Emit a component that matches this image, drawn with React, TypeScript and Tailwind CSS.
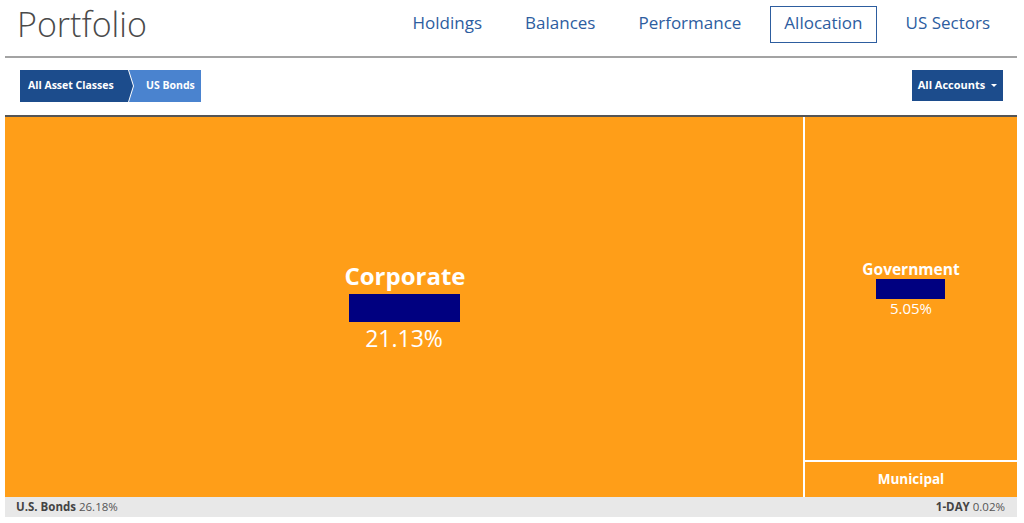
import React from "react";

const font = { fontFamily: '"Open Sans", "Noto Sans", Arial, sans-serif' };

function Tile({ label, pct, barW, barH, labelCls, pctCls }: { label: string; pct: string; barW: string; barH: string; labelCls: string; pctCls: string }) {
  return (
    <div className="flex flex-col items-center">
      <div className={labelCls}>{label}</div>
      <div className={`${barW} ${barH} bg-[#000080]`} />
      <div className={pctCls}>{pct}</div>
    </div>
  );
}

export default function App() {
  const nav = ["Holdings", "Balances", "Performance", "Allocation", "US Sectors"];
  return (
    <div style={font} className="w-[1024px] h-[523px] bg-white overflow-hidden pl-[5px] pr-[7px]">
      {/* header */}
      <div className="h-[58px] flex items-start justify-between border-b-2 border-[#a3a3a3]">
        <div className="pl-[12px] pt-[2px] text-[34px] leading-[44px] font-light text-[#4a4a4a]">Portfolio</div>
        <div className="flex gap-[15px] pt-[6px] pr-[13px]">
          {nav.map((n) => (
            <div
              key={n}
              className={`h-[37px] px-[13px] pb-[3px] flex items-center text-[17px] text-[#2d5d9f] ${n === "Allocation" ? "border border-[#2d5d9f]" : "border border-transparent"}`}
            >
              {n}
            </div>
          ))}
        </div>
      </div>
      {/* breadcrumb row */}
      <div className="h-[59px] flex items-start justify-between pt-[12px] pl-[15px] pr-[14px] border-b-2 border-[#555]">
        <div className="flex h-[32px] text-[10.5px] font-bold text-white">
          <div className="w-[113px] h-full bg-[#1c4c8c] pl-[8px] flex items-center [clip-path:polygon(0_0,108px_0,113px_50%,108px_100%,0_100%)] z-10 relative">
            All Asset Classes
          </div>
          <div className="-ml-[5px] w-[73px] h-full bg-white [clip-path:polygon(0_0,100%_0,100%_100%,0_100%,5px_50%)] relative">
            <div className="absolute inset-y-0 right-0 left-[1px] bg-[#4a83cf] pl-[17px] flex items-center [clip-path:polygon(0_0,100%_0,100%_100%,0_100%,5px_50%)]">
              US Bonds
            </div>
          </div>
        </div>
        <div className="h-[31px] w-[91px] bg-[#1c4c8c] text-white text-[11px] font-bold flex items-center justify-center gap-[6px]">
          All Accounts
          <span className="w-0 h-0 border-l-[3px] border-r-[3px] border-t-[3px] border-l-transparent border-r-transparent border-t-white" />
        </div>
      </div>
      {/* treemap */}
      <div className="h-[380px] flex bg-white">
        <div className="w-[798px] h-full bg-[#ff9e18] flex items-center justify-center">
          <Tile
            label="Corporate"
            pct="21.13%"
            barW="w-[111px]"
            barH="h-[28px]"
            labelCls="text-[24px] leading-[28px] font-bold text-white mb-[4px] pl-[2px]"
            pctCls="text-[23px] leading-[30px] text-white mt-[1px]"
          />
        </div>
        <div className="w-[2px]" />
        <div className="flex-1 flex flex-col">
          <div className="h-[343px] bg-[#ff9e18] flex items-center justify-center">
            <Tile
              label="Government"
              pct="5.05%"
              barW="w-[69px]"
              barH="h-[20px]"
              labelCls="text-[15.5px] leading-[18px] font-bold text-white mb-[1px]"
              pctCls="text-[15px] leading-[19px] text-white"
            />
          </div>
          <div className="h-[2px]" />
          <div className="flex-1 bg-[#ff9e18] flex items-center justify-center text-[13.5px] font-bold text-white">Municipal</div>
        </div>
      </div>
      {/* footer */}
      <div className="h-[20px] bg-[#e8e8e8] flex items-center justify-between pl-[11px] pr-[12px] text-[11.5px] text-[#555]">
        <div>
          <span className="font-bold text-[#444]">U.S. Bonds</span> 26.18%
        </div>
        <div>
          <span className="font-bold text-[#444]">1-DAY</span> 0.02%
        </div>
      </div>
    </div>
  );
}
